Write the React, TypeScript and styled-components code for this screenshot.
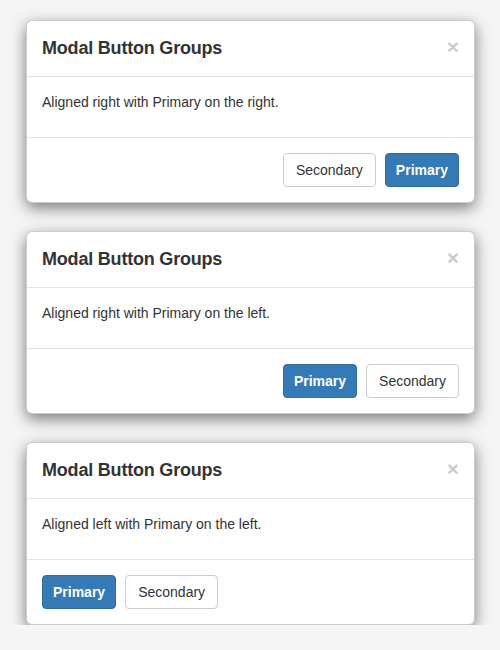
import React from 'react';
import styled, { createGlobalStyle } from 'styled-components';

const Global = createGlobalStyle`
	html, body {
		margin: 0;
		background: #f5f5f5;
	}
	body {
		font-family: 'Liberation Sans', Arial, sans-serif;
		font-size: 14px;
		line-height: 20px;
		color: #333;
	}
`;

const Page = styled.div`
	display: flex;
	flex-direction: column;
	gap: 28px;
	padding: 20px 25px 0 26px;
`;

const Modal = styled.div`
	background: #fff;
	border: 1px solid rgba(0, 0, 0, 0.2);
	border-radius: 6px;
	box-shadow: 0 5px 15px rgba(0, 0, 0, 0.5);
`;

const Header = styled.div`
	display: flex;
	align-items: flex-start;
	justify-content: space-between;
	padding: 15px;
	border-bottom: 1px solid #e5e5e5;
`;

const Title = styled.h4`
	margin: 0;
	font-size: 18px;
	font-weight: 600;
	line-height: 25px;
	letter-spacing: -0.2px;
	color: #333;
`;

const Close = styled.button`
	border: 0;
	background: transparent;
	padding: 0;
	font-family: 'Liberation Sans', Arial, sans-serif;
	font-size: 21px;
	font-weight: 700;
	line-height: 1;
	color: #000;
	opacity: 0.2;
	cursor: pointer;
`;

const Body = styled.div`
	padding: 15px;
	p {
		margin: 0 0 10px;
	}
`;

const Footer = styled.div<{ $align: 'left' | 'right' }>`
	display: flex;
	justify-content: ${(p) => (p.$align === 'left' ? 'flex-start' : 'flex-end')};
	gap: 9px;
	padding: 15px;
	border-top: 1px solid #e5e5e5;
`;

const Btn = styled.button<{ $primary?: boolean }>`
	font-family: 'Liberation Sans', Arial, sans-serif;
	font-size: 14px;
	line-height: 20px;
	padding: 6px ${(p) => (p.$primary ? '10px' : '12px')};
	border-radius: 4px;
	border: 1px solid ${(p) => (p.$primary ? '#2e6da4' : '#ccc')};
	background: ${(p) => (p.$primary ? '#337ab7' : '#fff')};
	color: ${(p) => (p.$primary ? '#fff' : '#333')};
	font-weight: ${(p) => (p.$primary ? 700 : 400)};
	cursor: pointer;
`;

type Variant = { text: string; align: 'left' | 'right'; primaryFirst: boolean };

const variants: Variant[] = [
	{ text: 'Aligned right with Primary on the right.', align: 'right', primaryFirst: false },
	{ text: 'Aligned right with Primary on the left.', align: 'right', primaryFirst: true },
	{ text: 'Aligned left with Primary on the left.', align: 'left', primaryFirst: true },
];

const ButtonModal = ({ text, align, primaryFirst }: Variant) => {
	const primary = <Btn $primary key='p'>Primary</Btn>;
	const secondary = <Btn key='s'>Secondary</Btn>;
	return (
		<Modal>
			<Header>
				<Title>Modal Button Groups</Title>
				<Close aria-label='Close'>×</Close>
			</Header>
			<Body>
				<p>{text}</p>
			</Body>
			<Footer $align={align}>
				{primaryFirst ? [primary, secondary] : [secondary, primary]}
			</Footer>
		</Modal>
	);
};

export default function App() {
	return (
		<>
			<Global />
			<Page>
				{variants.map((v) => (
					<ButtonModal key={v.text} {...v} />
				))}
			</Page>
		</>
	);
}
